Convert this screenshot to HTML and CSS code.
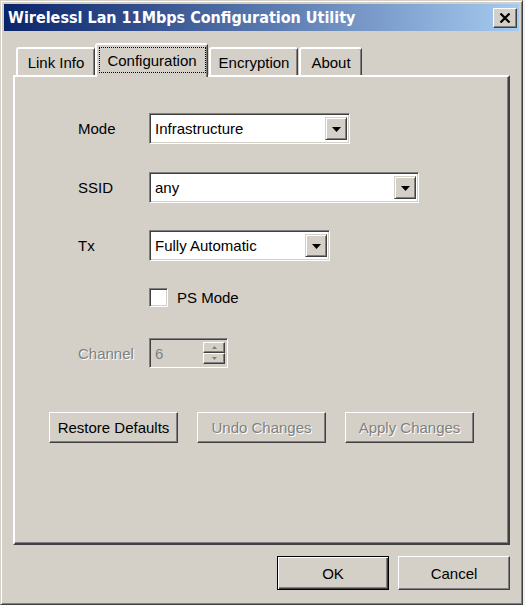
FILE: index.html
```html
<!DOCTYPE html>
<html lang="en">
<head>
  <meta charset="UTF-8">
  <meta name="viewport" content="width=device-width, initial-scale=1.0">
  <title>Wirelessl Lan 11Mbps Configuration Utility</title>
  <link rel="stylesheet" href="styles.css">
</head>
<body>
  <div class="window">
    <div class="titlebar">
      <span class="title">Wirelessl Lan 11Mbps Configuration Utility</span>
      <div class="close">
        <svg width="12" height="10" viewBox="0 0 12 10">
          <path d="M1.5 0.5 L10.5 9.5 M10.5 0.5 L1.5 9.5" stroke="#000" stroke-width="2.2" fill="none"/>
        </svg>
      </div>
    </div>

    <div class="content">
      <div class="tabs">
        <div class="tab tab-link">Link Info</div>
        <div class="tab tab-active"><span class="focus">Configuration</span></div>
        <div class="tab tab-enc">Encryption</div>
        <div class="tab tab-about">About</div>
      </div>

      <div class="panel">
        <div class="row row-mode">
          <span class="label">Mode</span>
          <div class="combo combo-mode">
            <span class="combo-text">Infrastructure</span>
            <span class="drop">
              <svg width="9" height="5" viewBox="0 0 9 5"><polygon points="0,0 9,0 4.5,5" fill="#000"/></svg>
            </span>
          </div>
        </div>

        <div class="row row-ssid">
          <span class="label">SSID</span>
          <div class="combo combo-ssid">
            <span class="combo-text">any</span>
            <span class="drop">
              <svg width="9" height="5" viewBox="0 0 9 5"><polygon points="0,0 9,0 4.5,5" fill="#000"/></svg>
            </span>
          </div>
        </div>

        <div class="row row-tx">
          <span class="label">Tx</span>
          <div class="combo combo-tx">
            <span class="combo-text">Fully Automatic</span>
            <span class="drop">
              <svg width="9" height="5" viewBox="0 0 9 5"><polygon points="0,0 9,0 4.5,5" fill="#000"/></svg>
            </span>
          </div>
        </div>

        <div class="row row-ps">
          <span class="check"></span>
          <span class="check-label">PS Mode</span>
        </div>

        <div class="row row-channel">
          <span class="label disabled">Channel</span>
          <div class="spin">
            <span class="spin-text">6</span>
            <span class="spin-btns">
              <span class="spin-btn">
                <svg width="5" height="3" viewBox="0 0 5 3"><polygon points="2.5,0 5,3 0,3" fill="#808080"/></svg>
              </span>
              <span class="spin-btn">
                <svg width="5" height="3" viewBox="0 0 5 3"><polygon points="0,0 5,0 2.5,3" fill="#808080"/></svg>
              </span>
            </span>
          </div>
        </div>

        <div class="actions">
          <button class="btn btn-wide">Restore Defaults</button>
          <button class="btn btn-wide" disabled>Undo Changes</button>
          <button class="btn btn-wide" disabled>Apply Changes</button>
        </div>
      </div>

      <div class="footer">
        <button class="btn btn-dialog btn-default">OK</button>
        <button class="btn btn-dialog">Cancel</button>
      </div>
    </div>
  </div>
</body>
</html>
```

FILE: styles.css
```css
* {
  margin: 0;
  padding: 0;
  box-sizing: border-box;
}

body {
  background: #f0f0f0;
  font-family: "Liberation Sans", Arial, sans-serif;
  font-size: 15px;
  color: #000;
}

.window {
  width: 523px;
  height: 605px;
  background: #d4d0c8;
  border: 1px solid;
  border-color: #d4d0c8 #404040 #404040 #d4d0c8;
  box-shadow: inset 1px 1px #fff, inset -1px -1px #808080;
  padding: 3px;
  display: flex;
  flex-direction: column;
}

/* title bar */
.titlebar {
  height: 27px;
  flex-shrink: 0;
  background: linear-gradient(to right, #0a246a, #a6caf0);
  display: flex;
  align-items: center;
  justify-content: space-between;
  padding: 0 2px 0 4px;
}

.title {
  color: #fff;
  font-family: "DejaVu Sans Condensed", "DejaVu Sans", sans-serif;
  font-weight: bold;
  font-size: 16px;
}

.close {
  width: 24px;
  height: 20px;
  background: #d4d0c8;
  border: 1px solid;
  border-color: #fff #404040 #404040 #fff;
  box-shadow: inset -1px -1px #808080;
  display: flex;
  align-items: center;
  justify-content: center;
}

.content {
  flex: 1;
  padding: 12px 9px 11px 9px;
  display: flex;
  flex-direction: column;
}

/* tabs */
.tabs {
  display: flex;
  align-items: flex-end;
  height: 32px;
  padding-left: 3px;
}

.tab {
  height: 28px;
  display: flex;
  align-items: center;
  justify-content: center;
  background: #d4d0c8;
  border-left: 2px solid #fff;
  border-top: 2px solid #fff;
  border-right: 1px solid #404040;
  border-radius: 3px 3px 0 0;
  box-shadow: inset -1px 0 #808080;
}

.tab-link {
  width: 79px;
}

.tab-active {
  position: relative;
  z-index: 1;
  width: 113px;
  height: 34px;
  margin-bottom: -2px;
  padding-bottom: 2px;
}

.focus {
  width: 107px;
  height: 26px;
  border: 1px dotted #000;
  display: flex;
  align-items: center;
  justify-content: center;
}

.tab-enc {
  width: 89px;
  margin-left: 1px;
}

.tab-about {
  width: 63px;
  margin-left: 1px;
}

/* panel */
.panel {
  height: 470px;
  flex-shrink: 0;
  border: 2px solid;
  border-color: #fff #404040 #404040 #fff;
  box-shadow: inset -1px -1px #808080;
  padding: 36px 0 0 34px;
  display: flex;
  flex-direction: column;
}

.row {
  display: flex;
  align-items: center;
  height: 31px;
  padding-left: 29px;
}

.row-ssid {
  margin-top: 28px;
}

.row-tx {
  margin-top: 27px;
}

.row-ps {
  margin-top: 21px;
}

.row-channel {
  margin-top: 25px;
  height: 30px;
}

.label {
  width: 71px;
}

.disabled {
  color: #808080;
  text-shadow: 1px 1px #fff;
}

.combo {
  height: 31px;
  background: #fff;
  border: 1px solid;
  border-color: #808080 #fff #fff #808080;
  box-shadow: inset 1px 1px #404040, inset -1px -1px #d4d0c8;
  padding: 3px 2px 3px 5px;
  display: flex;
  align-items: center;
  justify-content: space-between;
}

.combo-mode {
  width: 201px;
}

.combo-ssid {
  width: 270px;
}

.combo-tx {
  width: 181px;
}

.drop {
  width: 22px;
  height: 23px;
  background: #d4d0c8;
  border: 1px solid;
  border-color: #d4d0c8 #404040 #404040 #d4d0c8;
  box-shadow: inset 1px 1px #fff, inset -1px -1px #808080;
  display: flex;
  align-items: center;
  justify-content: center;
  padding-top: 1px;
}

.check {
  width: 19px;
  height: 19px;
  margin-left: 71px;
  background: #fff;
  border: 1px solid;
  border-color: #808080 #fff #fff #808080;
  box-shadow: inset 1px 1px #404040, inset -1px -1px #d4d0c8;
}

.check-label {
  margin-left: 9px;
}

.spin {
  width: 79px;
  height: 30px;
  background: #d4d0c8;
  border: 1px solid;
  border-color: #808080 #fff #fff #808080;
  box-shadow: inset 1px 1px #404040, inset -1px -1px #d4d0c8;
  padding: 2px 2px 2px 5px;
  display: flex;
  align-items: center;
  justify-content: space-between;
  color: #808080;
}

.spin-btns {
  display: flex;
  flex-direction: column;
  height: 100%;
  justify-content: space-between;
  padding: 1px 0;
}

.spin-btn {
  width: 22px;
  height: 12px;
  background: #d4d0c8;
  border: 1px solid;
  border-color: #fff #404040 #404040 #fff;
  box-shadow: inset -1px -1px #808080;
  display: flex;
  align-items: center;
  justify-content: center;
}

/* buttons */
.actions {
  display: flex;
  gap: 19px;
  margin-top: 44px;
}

.btn {
  height: 31px;
  background: #d4d0c8;
  border: 1px solid;
  border-color: #fff #404040 #404040 #fff;
  box-shadow: inset -1px -1px #808080;
  font-family: inherit;
  font-size: 15px;
  color: #000;
}

.btn:disabled {
  color: #808080;
  text-shadow: 1px 1px #fff;
}

.btn-wide {
  width: 129px;
}

.footer {
  display: flex;
  justify-content: flex-end;
  gap: 9px;
  margin-top: 11px;
}

.btn-dialog {
  width: 112px;
  height: 34px;
}

.btn-default {
  border-color: #000;
  box-shadow: inset 1px 1px #fff, inset -1px -1px #404040, inset -2px -2px #808080;
}
```
